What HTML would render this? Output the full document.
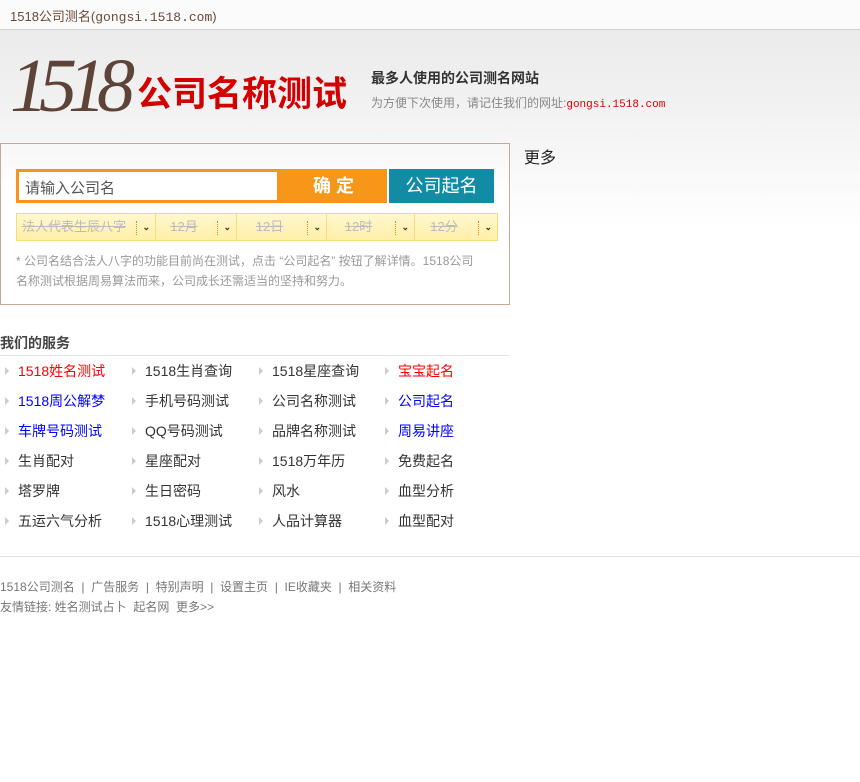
<!DOCTYPE html><html><head><meta charset="utf-8"><style>
*{margin:0;padding:0;box-sizing:border-box}
body{width:860px;height:782px;background:#fff;font-family:"Liberation Sans","Noto Sans CJK SC",sans-serif;position:relative;overflow:hidden;color:#333}
.a{position:absolute;white-space:nowrap}
.top{left:0;top:0;width:860px;height:30px;background:#fbfbfb;border-bottom:1px solid #d9d2cc}
.hd{left:0;top:30px;width:860px;height:200px;background:linear-gradient(#ebebeb,#f2f2f2 40%,#fff)}
.box{left:0;top:143px;width:510px;height:162px;border:1px solid #c9a79a;background:linear-gradient(#f7f7f7,#fff 30%)}
.sel{top:213px;height:28px;background:linear-gradient(#fff8d0,#ffefa8);border:1px solid #f5dd7e;font-size:13px;color:#bbb;text-decoration:line-through;text-align:center;line-height:26px}
.sel i{position:absolute;right:18px;top:7px;height:14px;border-left:1px dotted #e08a00}
.sel b{position:absolute;right:5px;top:0;font-size:9px;color:#5a2a00;text-decoration:none;font-weight:bold}
.g{font-size:14px;color:#333}
.g span{position:absolute}
.ar{position:absolute;width:0;height:0;border-left:4px solid #ccc;border-top:4px solid transparent;border-bottom:4px solid transparent}
.ft{font-size:12px;color:#777}
</style></head><body>
<div class="a top"></div>
<div class="a" style="left:10px;top:6px;font-size:13px;color:#6b4a3a">1518公司测名(<span style="font-family:'Liberation Mono',monospace">gongsi.1518.com</span>)</div>
<div class="a hd"></div>
<div class="a" style="left:10px;top:38px;font-size:76px;font-style:italic;color:#5e4339;font-family:'Liberation Serif',serif;letter-spacing:-9px;line-height:96px">1518</div>
<div class="a" style="left:137px;top:75px;font-size:35px;font-weight:bold;color:#d20000;line-height:40px">公司名称测试</div>
<div class="a" style="left:371px;top:68px;font-size:14px;font-weight:bold;color:#333">最多人使用的公司测名网站</div>
<div class="a" style="left:371px;top:94px;font-size:12px;color:#888">为方便下次使用，请记住我们的网址:<span style="color:#d00;font-family:'Liberation Mono',monospace;font-size:11px">gongsi.1518.com</span></div>
<div class="a" style="left:524px;top:144px;font-size:16px;color:#222">更多</div>
<div class="a box"></div>
<div class="a" style="left:16px;top:169px;width:264px;height:34px;border:3px solid #f7941d;background:#fff;font-size:15px;color:#555;padding:5px 6px">请输入公司名</div>
<div class="a" style="left:280px;top:169px;width:107px;height:34px;background:#f7971a;color:#fff;font-size:18px;font-weight:bold;text-align:center;line-height:34px">确 定</div>
<div class="a" style="left:389px;top:169px;width:105px;height:34px;background:#128ba4;color:#fff;font-size:18px;text-align:center;line-height:34px">公司起名</div>
<div class="a sel" style="left:16px;width:140px;padding-right:24px">法人代表生辰八字<i></i><b>⌄</b></div>
<div class="a sel" style="left:155px;width:82px;padding-right:24px">12月<i></i><b>⌄</b></div>
<div class="a sel" style="left:236px;width:91px;padding-right:24px">12日<i></i><b>⌄</b></div>
<div class="a sel" style="left:326px;width:89px;padding-right:24px">12时<i></i><b>⌄</b></div>
<div class="a sel" style="left:414px;width:84px;padding-right:24px">12分<i></i><b>⌄</b></div>
<div class="a" style="left:16px;top:251px;font-size:12px;color:#999;line-height:20px">* 公司名结合法人八字的功能目前尚在测试，点击 “公司起名” 按钮了解详情。1518公司<br>名称测试根据周易算法而来，公司成长还需适当的坚持和努力。</div>
<div class="a" style="left:0;top:333px;font-size:14px;font-weight:bold;color:#444">我们的服务</div>
<div class="a" style="left:0;top:355px;width:509px;border-top:1px solid #e3e3e3"></div>
<div class="a g" style="left:0;top:0;width:510px;height:540px">
<script>
var d=[["1518姓名测试","#f00","1518生肖查询","","1518星座查询","","宝宝起名","#f00"],["1518周公解梦","#00f","手机号码测试","","公司名称测试","","公司起名","#00f"],["车牌号码测试","#00f","QQ号码测试","","品牌名称测试","","周易讲座","#00f"],["生肖配对","","星座配对","","1518万年历","","免费起名",""],["塔罗牌","","生日密码","","风水","","血型分析",""],["五运六气分析","","1518心理测试","","人品计算器","","血型配对",""]];
var xs=[18,145,272,398],h="";
d.forEach(function(r,i){for(var j=0;j<4;j++){var y=361+i*30;h+='<div class="ar" style="left:'+(xs[j]-13)+'px;top:'+(y+6)+'px"></div><span style="left:'+xs[j]+'px;top:'+y+'px;color:'+(r[j*2+1]||'#333')+'">'+r[j*2]+'</span>';}});
document.write(h);
</script></div>
<div class="a" style="left:0;top:556px;width:860px;border-top:1px solid #e5e5e5"></div>
<div class="a ft" style="left:0;top:578px">1518公司测名 &nbsp;|&nbsp; 广告服务 &nbsp;|&nbsp; 特别声明 &nbsp;|&nbsp; 设置主页 &nbsp;|&nbsp; IE收藏夹 &nbsp;|&nbsp; 相关资料</div>
<div class="a ft" style="left:0;top:598px">友情链接: 姓名测试占卜 &nbsp;起名网 &nbsp;更多&gt;&gt;</div>
</body></html>
